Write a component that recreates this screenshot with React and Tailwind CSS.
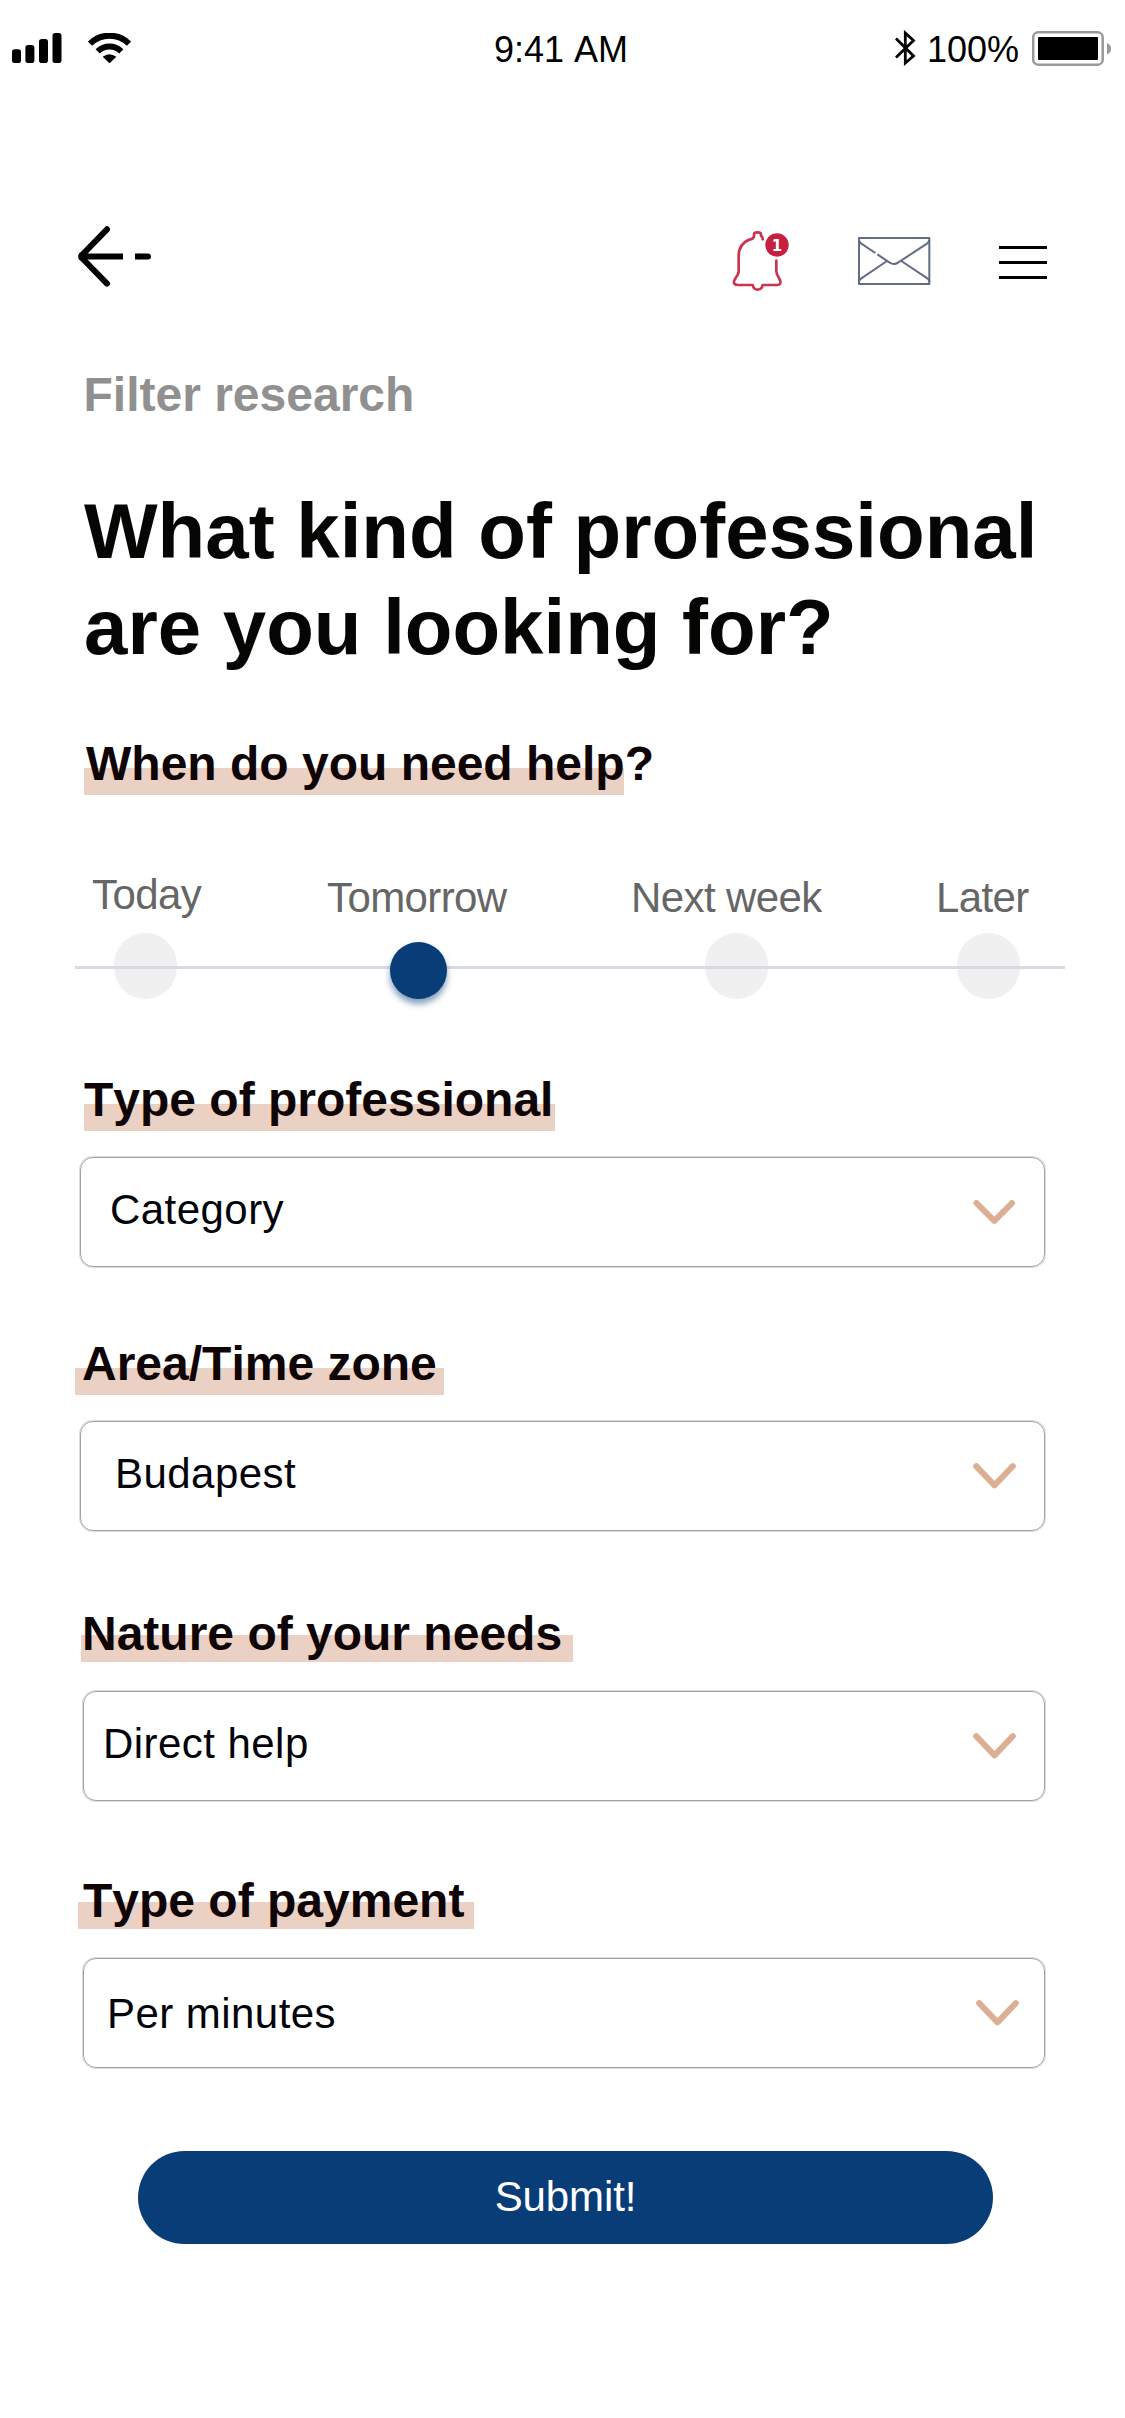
function SignalIcon() {
  return (
    <svg className="mt-1 h-[30px] w-[50px]" viewBox="0 0 50 30">
      <rect x="0" y="16.2" width="9" height="13.8" rx="2.8" />
      <rect x="13.4" y="12" width="9" height="18" rx="2.8" />
      <rect x="27" y="6" width="9" height="24" rx="2.8" />
      <rect x="40.5" y="0" width="9" height="30" rx="2.8" />
    </svg>
  );
}

function WifiIcon() {
  return (
    <svg className="mt-1 ml-[26px] h-[30px] w-[43px]" viewBox="264 98 129 90">
      <g fill="none" stroke="#000" strokeWidth="18">
        <path d="M270 130 A83 83 0 0 1 387 130" />
        <path d="M293 153 A51 51 0 0 1 364 153" />
      </g>
      <path d="M308 169 Q328 154 349 169 L328.500 189 Z" />
    </svg>
  );
}

function BluetoothIcon() {
  return (
    <svg className="mt-px ml-[267px] h-9 w-[21px]" viewBox="0 0 21 36" fill="none" stroke="#000" strokeWidth="2.800">
      <path d="M1 8.500 L18.500 26 L10.300 33 V3 L18.500 10.500 L1 27.500" />
    </svg>
  );
}

function BatteryIcon() {
  return (
    <svg className="mt-0.5 ml-[14px] h-[35px] w-20" viewBox="0 0 80 35">
      <rect x="1.2" y="1.300" width="69.500" height="32.400" rx="5" fill="none" stroke="#999" strokeWidth="2.500" />
      <rect x="6" y="6" width="60" height="23" rx="1" />
      <path d="M75 12 Q79 13.500 79 17.500 Q79 22 75 23.500 Z" fill="#999" />
    </svg>
  );
}

function BackIcon() {
  return (
    <svg className="mt-[130px] h-[61px] w-[73px]" viewBox="0 0 73 61" fill="none" stroke="#000" strokeWidth="6" strokeLinecap="round" strokeLinejoin="round">
      <path d="M29 3.300 L3.500 29.500 V31.500 L29 57.600" />
      <path d="M3.500 29.500 L8 30.500 L3.500 31.500" />
      <path d="M6 30.500 H45" strokeLinecap="butt" />
      <path d="M57 30.500 H62" strokeLinecap="butt" />
      <path d="M62 30.500 H70" />
    </svg>
  );
}

function BellIcon() {
  return (
    <svg className="mt-[134px] ml-[581px] h-[62px] w-[58px]" viewBox="96 60 174 186">
      <g fill="none" stroke="#cb3350" strokeWidth="8" strokeLinecap="round" strokeLinejoin="round">
        <path d="M188 88 L187 82 L183 77 V73 Q183 67 172 67 Q162 67 162 73 V78 Q161 86 151 88 Q116 101 116 138 V184 Q116 192 107 204 Q99 216 103 221 Q106 225 113 225 H158 Q161 239 173 239 Q185 239 188 225 H232 Q238 225 241 220 Q243 215 237 204 Q229 192 229 184 V152" />
      </g>
      <circle cx="231" cy="105" r="35" fill="#c5203f" />
      <text x="231" y="122" textAnchor="middle" fill="#fff" fontFamily="DejaVu Sans" fontWeight="700" fontSize="45">1</text>
    </svg>
  );
}

function MailIcon() {
  return (
    <svg className="mt-[140px] ml-[67px] h-[50px] w-[74px]" viewBox="471 78 222 150" fill="none" stroke="#626c82" strokeWidth="6" strokeLinejoin="round">
      <rect x="477" y="84" width="211" height="138" />
      <path d="M477 90 Q478 97 484 101 L526 129" />
      <path d="M532 133 L569 158 Q582 166 594 158 L682 100 Q687 96 688 90" />
      <path d="M477 216 Q478 209 484 205 L561 153" />
      <path d="M688 216 Q687 209 682 205 L604 153" />
    </svg>
  );
}

function MenuIcon() {
  return (
    <div className="mt-[150px] ml-[68px] flex w-12 flex-col gap-3">
      <div className="h-[3px] bg-black" />
      <div className="h-[3px] bg-black" />
      <div className="h-[3px] bg-black" />
    </div>
  );
}

function Label({ className, children }) {
  return (
    <h2 className={`text-[48px] leading-[53px] font-bold whitespace-nowrap text-[#0f0506] [font-kerning:none] ${className}`}>
      {children}
    </h2>
  );
}

function Select({ value, className, textClass, chevronClass, first }) {
  return (
    <button
      type="button"
      className={`flex h-[110px] items-start justify-between rounded-[13px] border border-[#9fa1a1] text-left shadow-[0_0_0_1px_#dcdddd] ${className}`}
    >
      <span className={`text-[42px] leading-[47px] tracking-[0.45px] whitespace-nowrap text-[#02040a] ${textClass}`}>{value}</span>
      <svg
        className={`h-[26px] w-[43px] ${chevronClass}`}
        viewBox="0 0 43 26"
        fill="none"
        stroke="#dcae94"
        strokeWidth="6"
        strokeLinecap="round"
        strokeLinejoin="round"
      >
        <path d={first ? "M3.500 3.100 L21.300 20.800 L39 3.100" : "M3.200 3.200 L21.500 22.300 L39.800 3.200"} />
      </svg>
    </button>
  );
}

function Step({ label, className, labelClass, dotClass }) {
  return (
    <div className={`flex flex-col ${className}`}>
      <span className={`text-[42px] leading-[47px] tracking-[-0.6px] whitespace-nowrap text-[#666] ${labelClass}`}>{label}</span>
      <div className={`rounded-full ${dotClass}`} />
    </div>
  );
}

export default function App() {
  return (
    <div className="flex h-[2418px] w-[1125px] flex-col overflow-hidden bg-white font-['Liberation_Sans',Arial,sans-serif] text-black">
      <div className="flex h-24 items-start pt-[29px] pl-3">
        <SignalIcon />
        <WifiIcon />
        <span className="ml-[363px] w-[134px] text-[36px] leading-[41px] whitespace-nowrap [font-kerning:none]">9:41 AM</span>
        <BluetoothIcon />
        <span className="ml-[11px] w-[91px] text-[36px] leading-[41px]">100%</span>
        <BatteryIcon />
      </div>

      <header className="flex h-[272px] items-start pl-[78px]">
        <BackIcon />
        <BellIcon />
        <MailIcon />
        <MenuIcon />
      </header>

      <p className="ml-[83.500px] text-[48px] leading-[53px] font-bold text-[#909090]">Filter research</p>
      <h1 className="mt-[62px] ml-[84px] text-[78px] leading-[96px] font-bold whitespace-nowrap text-[#050504]">
        What kind of professional
        <br />
        are you looking for?
      </h1>

      <Label className="mt-[62px] ml-[84px] h-[58px] w-[540px] bg-[linear-gradient(transparent_31px,#ebd0c4_31px)] pl-0.5">
        When do you need help?
      </Label>

      <div className="relative mt-[76px] flex h-32 items-start pl-[92px]">
        <Step label="Today" className="w-[235px]" dotClass="mt-[15px] ml-[22px] h-[66px] w-[63px] bg-[#f0f0f0]" />
        <Step
          label="Tomorrow"
          className="w-[304px]"
          labelClass="mt-[3px]"
          dotClass="relative z-10 mt-[21px] ml-[63px] size-[57px] bg-[#093d77] shadow-[0_5px_6px_rgba(9,61,119,0.5)]"
        />
        <Step label="Next week" className="w-[305px]" labelClass="mt-[3px]" dotClass="mt-3 ml-[74px] h-[66px] w-[63px] bg-[#f0f0f0]" />
        <Step label="Later" className="w-[120px]" labelClass="mt-[3px]" dotClass="mt-3 ml-[21px] h-[66px] w-[63px] bg-[#f0f0f0]" />
        <div className="absolute top-[95px] left-[75px] h-[3px] w-[990px] bg-[#d6dbe2]" />
      </div>

      <Label className="mt-[74px] ml-[84px] h-[58px] w-[471px] bg-[linear-gradient(transparent_31px,#ebd0c4_31px)]">
        Type of professional
      </Label>
      <Select value="Category" first className="mt-[26px] ml-20 w-[965px]" textClass="mt-7 ml-[29px]" chevronClass="mt-[42px] mr-[28px]" />

      <Label className="mt-[70px] ml-[75px] h-[58px] w-[369px] bg-[linear-gradient(transparent_31px,#ebd0c4_31px)] pl-[7px]">
        Area/Time zone
      </Label>
      <Select value="Budapest" className="mt-[26px] ml-20 w-[965px]" textClass="mt-7 ml-[34px]" chevronClass="mt-[41px] mr-[28px]" />

      <Label className="mt-[76px] ml-[81px] h-[55px] w-[492px] bg-[linear-gradient(transparent_28px,#ebd0c4_28px)] pl-px">
        Nature of your needs
      </Label>
      <Select value="Direct help" className="mt-[29px] ml-[83px] w-[962px]" textClass="mt-7 ml-[19px]" chevronClass="mt-[41px] mr-[28px]" />

      <Label className="mt-[73px] ml-[78px] h-[55px] w-[396px] bg-[linear-gradient(transparent_28px,#ebd0c4_28px)] pl-[5px]">
        Type of payment
      </Label>
      <Select value="Per minutes" className="mt-[29px] ml-[83px] w-[962px]" textClass="mt-[31px] ml-[23px]" chevronClass="mt-[41px] mr-[25px]" />

      <button
        type="button"
        className="mt-[83px] ml-[138px] flex h-[93px] w-[855px] items-start justify-center rounded-full bg-[#093d77] pt-[22px] text-[42px] leading-[47px] tracking-[-0.1px] text-white"
      >
        Submit!
      </button>
    </div>
  );
}
